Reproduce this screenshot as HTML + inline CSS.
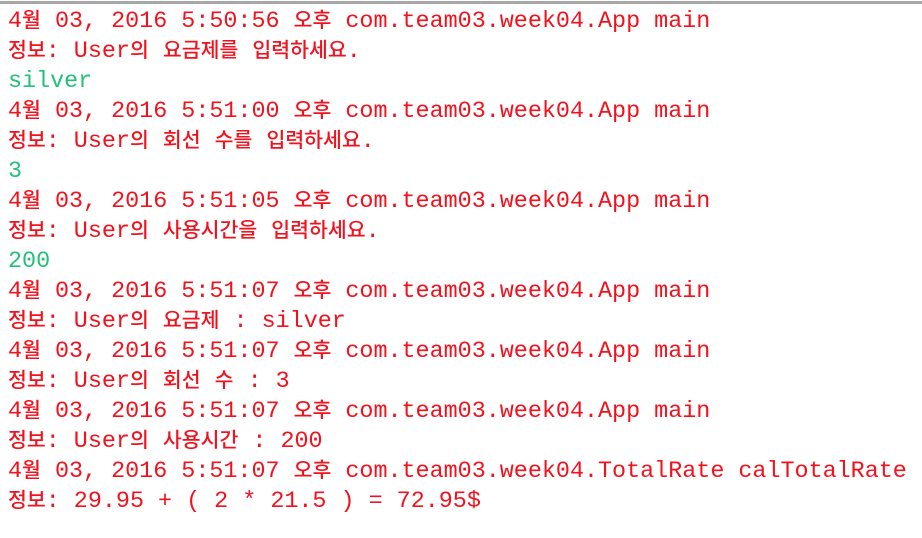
<!DOCTYPE html>
<html><head><meta charset="utf-8"><style>
html,body{margin:0;padding:0;background:#fff;width:922px;height:538px;overflow:hidden}
.top{position:absolute;left:0;top:1px;width:922px;height:3px;background:#a8a8a8}
.c{position:absolute;left:8px;top:7px;font-family:"Liberation Mono","Noto Sans CJK KR",monospace;font-size:23.4px;color:#f2111c}
.c div{height:30px;line-height:30px;white-space:pre;overflow:visible}
.g{color:#22c07a}
k{font-family:"Noto Sans CJK KR",sans-serif;font-size:20.5px;font-weight:500;line-height:0;vertical-align:baseline}
</style></head><body>
<div class="top"></div>
<div class="c">
<div>4<k>월</k> 03, 2016 5:50:56 <k>오후</k> com.team03.week04.App main</div>
<div><k>정보</k>: User<k>의</k> <k>요금제를</k> <k>입력하세요</k>.</div>
<div class="g">silver</div>
<div>4<k>월</k> 03, 2016 5:51:00 <k>오후</k> com.team03.week04.App main</div>
<div><k>정보</k>: User<k>의</k> <k>회선</k> <k>수를</k> <k>입력하세요</k>.</div>
<div class="g">3</div>
<div>4<k>월</k> 03, 2016 5:51:05 <k>오후</k> com.team03.week04.App main</div>
<div><k>정보</k>: User<k>의</k> <k>사용시간을</k> <k>입력하세요</k>.</div>
<div class="g">200</div>
<div>4<k>월</k> 03, 2016 5:51:07 <k>오후</k> com.team03.week04.App main</div>
<div><k>정보</k>: User<k>의</k> <k>요금제</k> : silver</div>
<div>4<k>월</k> 03, 2016 5:51:07 <k>오후</k> com.team03.week04.App main</div>
<div><k>정보</k>: User<k>의</k> <k>회선</k> <k>수</k> : 3</div>
<div>4<k>월</k> 03, 2016 5:51:07 <k>오후</k> com.team03.week04.App main</div>
<div><k>정보</k>: User<k>의</k> <k>사용시간</k> : 200</div>
<div>4<k>월</k> 03, 2016 5:51:07 <k>오후</k> com.team03.week04.TotalRate calTotalRate</div>
<div><k>정보</k>: 29.95 + ( 2 * 21.5 ) = 72.95$</div>
</div>
</body></html>
